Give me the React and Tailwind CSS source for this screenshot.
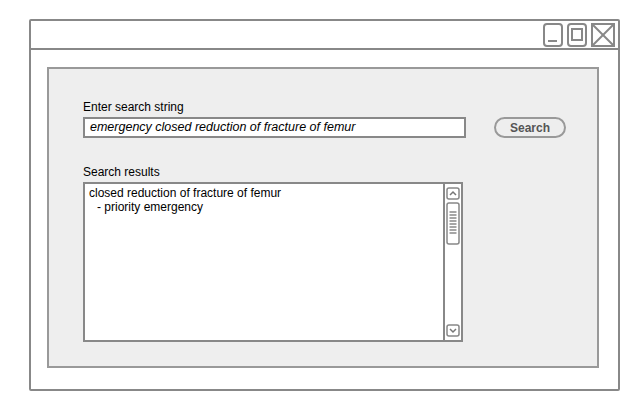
const font = { fontFamily: '"Liberation Sans", Arial, sans-serif' };

function WinButtons() {
  return (
    <div className="flex gap-[4px] pr-[3px] pt-[2px]">
      <svg width="20" height="24" viewBox="0 0 20 24">
        <rect x="1" y="1" width="18" height="22" rx="3" fill="none" stroke="#888" strokeWidth="2" />
        <line x1="5" y1="18" x2="14" y2="18" stroke="#888" strokeWidth="2" />
      </svg>
      <svg width="20" height="24" viewBox="0 0 20 24">
        <rect x="1" y="1" width="18" height="22" rx="3" fill="none" stroke="#888" strokeWidth="2" />
        <rect x="5" y="6" width="10" height="11" fill="none" stroke="#888" strokeWidth="2" />
      </svg>
      <svg width="24" height="24" viewBox="0 0 24 24">
        <rect x="1" y="1" width="22" height="22" fill="none" stroke="#888" strokeWidth="2" />
        <line x1="2" y1="2" x2="22" y2="22" stroke="#888" strokeWidth="2" />
        <line x1="22" y1="2" x2="2" y2="22" stroke="#888" strokeWidth="2" />
      </svg>
    </div>
  );
}

function Scrollbar() {
  return (
    <div className="w-[18px] border-l-2 border-[#888] flex flex-col items-center justify-between py-[3px]">
      <div className="flex flex-col items-center gap-[2px]">
        <svg width="14" height="13" viewBox="0 0 14 13">
          <rect x="1" y="1" width="12" height="11" rx="2" fill="none" stroke="#888" strokeWidth="1.5" />
          <polyline points="4,8 7,5 10,8" fill="none" stroke="#777" strokeWidth="1.5" />
        </svg>
        <svg width="14" height="43" viewBox="0 0 14 43">
          <rect x="1" y="1" width="12" height="41" rx="2" fill="none" stroke="#888" strokeWidth="1.5" />
          {[10, 13, 16, 19, 22, 25, 28, 31].map((y) => (
            <line key={y} x1="3.5" y1={y} x2="10.5" y2={y} stroke="#888" strokeWidth="1.5" />
          ))}
        </svg>
      </div>
      <svg width="14" height="13" viewBox="0 0 14 13">
        <rect x="1" y="1" width="12" height="11" rx="2" fill="none" stroke="#888" strokeWidth="1.5" />
        <polyline points="4,5 7,8 10,5" fill="none" stroke="#777" strokeWidth="1.5" />
      </svg>
    </div>
  );
}

export default function App() {
  return (
    <div className="w-[640px] h-[410px] bg-white pt-[19px] pl-[29px]" style={font}>
      <div className="w-[591px] h-[372px] border-2 border-[#888] rounded-[2px] flex flex-col">
        {/* TITLE BAR */}
        <div className="h-[29px] border-b-2 border-[#888] flex justify-end">
          <WinButtons />
        </div>

        {/* PANEL */}
        <div className="ml-[16px] mt-[17px] w-[552px] h-[301px] bg-[#eeeeee] border-2 border-[#999] pl-[34px] pt-[31px]">
          <div className="text-[12px] text-black leading-[14px]">Enter search string</div>
          <div className="flex items-center mt-[3px]">
            <div className="w-[383px] h-[21px] bg-white border-2 border-[#888] flex items-center px-[5px] text-[12.5px] italic text-black">
              emergency closed reduction of fracture of femur
            </div>
            <button className="ml-[28px] w-[72px] h-[21px] rounded-full border-2 border-[#999] bg-[#eeeeee] text-[12px] font-bold text-[#555] flex items-center justify-center">
              Search
            </button>
          </div>

          <div className="text-[12px] text-black leading-[14px] mt-[27px]">Search results</div>
          <div className="mt-[3px] w-[380px] h-[160px] bg-white border-2 border-[#888] flex">
            <div className="flex-1 text-[12px] text-black leading-[14px] px-[4px] pt-[2px]">
              <div>closed reduction of fracture of femur</div>
              <div className="pl-[8px]">- priority emergency</div>
            </div>
            <Scrollbar />
          </div>
        </div>
      </div>
    </div>
  );
}
